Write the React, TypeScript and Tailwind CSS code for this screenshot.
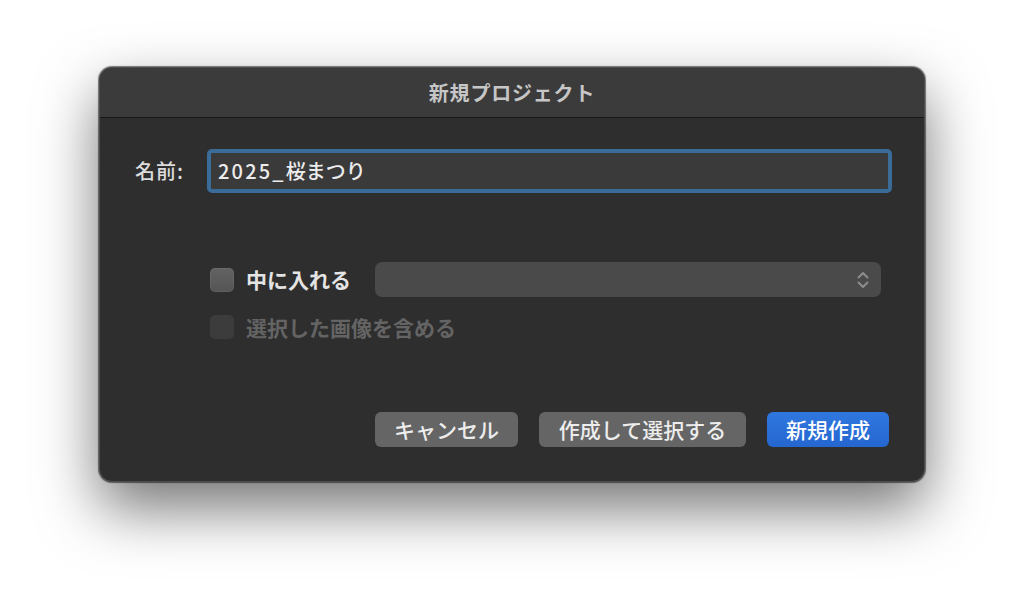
const font = { fontFamily: '"Noto Sans CJK JP", "Noto Sans", sans-serif' };

function Checkbox({ disabled }: { disabled?: boolean }) {
  return (
    <span
      className={
        disabled
          ? "block h-[24px] w-[24px] shrink-0 rounded-[5px] bg-[#3c3c3c]"
          : "block h-[24px] w-[24px] shrink-0 rounded-[5px] bg-gradient-to-b from-[#626262] to-[#555555] shadow-[inset_0_0_0_1px_rgba(255,255,255,0.06)]"
      }
    />
  );
}

function UpDownIcon() {
  return (
    <svg width="12" height="22" viewBox="0 0 12 22" fill="none" className="text-[#8c8c8c]">
      <path d="M1.5 8.5L6 4L10.5 8.5" stroke="currentColor" strokeWidth="2" strokeLinecap="round" strokeLinejoin="round" />
      <path d="M1.5 13.5L6 18L10.5 13.5" stroke="currentColor" strokeWidth="2" strokeLinecap="round" strokeLinejoin="round" />
    </svg>
  );
}

export default function App() {
  return (
    <div className="min-h-[613px] w-[1024px] bg-white pl-[99px] pt-[67px]" style={font}>
      <div className="flex h-[415px] w-[826px] flex-col overflow-hidden rounded-[13px] border border-[#4c4c4c] bg-[#2e2e2e] shadow-[0_26px_60px_rgba(0,0,0,0.55),0_0_1px_1px_rgba(0,0,0,0.5)]">
        {/* Title bar */}
        <div className="flex h-[50px] shrink-0 items-center justify-center border-b border-[#181818] bg-[#3b3b3b]">
          <span className="text-[20px] font-bold tracking-[0.8px] text-[#c6c6c6]">
            新規プロジェクト
          </span>
        </div>

        {/* Name row */}
        <div className="mt-[31px] flex h-[44px] items-center pl-[35px] pr-[32px]">
          <span className="mr-[23px] text-[20px] font-medium leading-none tracking-[1px] text-[#dcdcdc]">名前:</span>
          <div className="flex h-[44px] flex-1 items-center rounded-[5px] border-[4px] border-[#3b6c97] bg-[#3a3a3a] pl-[7px]">
            <span className="text-[20px] font-medium leading-none text-[#ececec]">
              <span className="tracking-[2.2px]">2025_</span>桜まつり
            </span>
          </div>
        </div>

        {/* Options */}
        <div className="mt-[69px] flex h-[35px] items-center pl-[110px] pr-[43px]">
          <Checkbox />
          <span className="ml-[12px] text-[21px] font-bold leading-none text-[#e4e4e4]">中に入れる</span>
          <div className="ml-[24px] flex h-[35px] flex-1 items-center justify-end rounded-[7px] bg-[#4a4a4a] pr-[12px]">
            <UpDownIcon />
          </div>
        </div>
        <div className="mt-[18px] flex h-[24px] items-center pl-[110px]">
          <Checkbox disabled />
          <span className="ml-[12px] text-[21px] font-bold leading-none text-[#646464]">選択した画像を含める</span>
        </div>

        {/* Buttons */}
        <div className="mt-[73px] flex h-[35px] items-center justify-end gap-[21px] pr-[35px]">
          <button className="flex h-[35px] w-[143px] items-center justify-center rounded-[6px] bg-[#656565] text-[21px] font-medium leading-none text-[#ededed]">
            キャンセル
          </button>
          <button className="flex h-[35px] w-[207px] items-center justify-center rounded-[6px] bg-[#656565] text-[21px] font-medium leading-none text-[#ededed]">
            作成して選択する
          </button>
          <button className="flex h-[35px] w-[122px] items-center justify-center rounded-[6px] bg-gradient-to-b from-[#2f78e0] to-[#2566cf] text-[21px] font-medium leading-none text-white">
            新規作成
          </button>
        </div>
      </div>
    </div>
  );
}
